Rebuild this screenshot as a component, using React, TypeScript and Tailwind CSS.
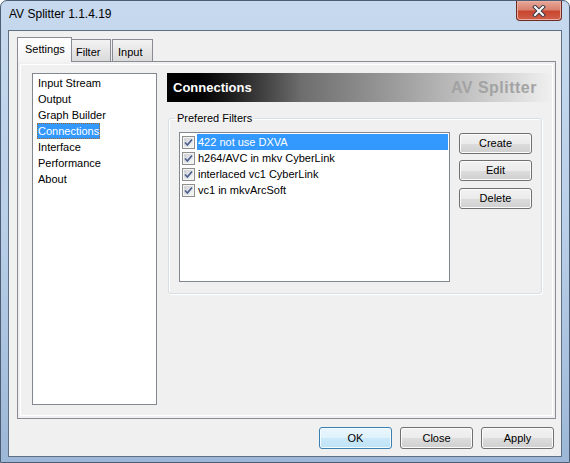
import React from "react";

const settingsPages = ["Input Stream", "Output", "Graph Builder", "Connections", "Interface", "Performance", "About"];

const filters = [
  { id: 1, name: "422 not use DXVA", selected: true },
  { id: 2, name: "h264/AVC in mkv CyberLink" },
  { id: 3, name: "interlaced vc1 CyberLink" },
  { id: 4, name: "vc1 in mkvArcSoft" },
];

function CheckBox() {
  return (
    <span className="w-[13px] h-[13px] shrink-0 border border-[#8f8f8f] bg-[#f4f4f4] p-[1px] flex">
      <span className="flex-1 flex items-center justify-center bg-linear-to-br from-[#cdd0d4] to-[#f7f7f7]">
        <svg width="9" height="9" viewBox="0 0 9 9">
          <path d="M1 4.5 L3.4 7 L8 1.5" fill="none" stroke="#4b5f8c" strokeWidth="1.7" />
        </svg>
      </span>
    </span>
  );
}

function WinButton({ label, isDefault = false, className = "" }: { label: string; isDefault?: boolean; className?: string }) {
  return (
    <button
      className={`w-[73px] rounded-[3px] border text-[11px] text-black leading-none ${
        isDefault
          ? "border-[#3c7fb1] bg-[linear-gradient(#eaf6fd,#dff2fc_50%,#cbe9f9_50%,#bde2f6)] shadow-[inset_0_0_0_1px_#f4fbff]"
          : "border-[#707070] bg-[linear-gradient(#f2f2f2,#ebebeb_50%,#dddddd_50%,#cfcfcf)] shadow-[inset_0_0_0_1px_#fbfbfb]"
      } ${className}`}
    >
      {label}
    </button>
  );
}

export default function App() {
  return (
    <div className="w-[570px] h-[463px] font-['Liberation_Sans',Arial,sans-serif] border border-[#4d5e74] rounded-t-[7px] bg-linear-to-b from-[#c6d9ee] via-[#b9cfe8] to-[#9cb7d7] flex flex-col overflow-hidden">
      {/* title bar */}
      <div className="h-[29px] flex justify-between items-start shrink-0">
        <span className="pl-[8px] pt-[6px] text-[12px] leading-[15px] text-black">AV Splitter 1.1.4.19</span>
        <div className="mr-[7px] w-[46px] h-[20px] rounded-b-[4px] border border-t-0 border-[#6e2b22] bg-[linear-gradient(#e7a89a,#d9826f_45%,#c84630_55%,#d0604a)] shadow-[inset_0_0_0_1px_#eab0a4] flex items-center justify-center">
          <svg width="14" height="12" viewBox="0 0 14 12">
            <path d="M3 2 L11 10 M11 2 L3 10" stroke="#3b3b4a" strokeWidth="4" strokeLinecap="square" />
            <path d="M3 2 L11 10 M11 2 L3 10" stroke="#ffffff" strokeWidth="2" strokeLinecap="square" />
          </svg>
        </div>
      </div>

      {/* client area */}
      <div className="mx-[7px] h-[427px] border border-[#5f6f84] bg-[#f0f0f0] flex flex-col text-[11px] text-black">
        {/* tabs */}
        <div className="h-[30px] pl-[8px] flex items-end shrink-0">
          <div className="relative z-10 -mb-px h-[25px] w-[55px] border border-b-0 border-[#898c95] bg-linear-to-b from-white to-[#f4f4f4] pl-[7px] pt-[4px] leading-[14px]">
            Settings
          </div>
          <div className="h-[22px] w-[39px] border border-b-0 border-l-0 border-[#898c95] bg-linear-to-b from-[#f3f3f3] to-[#dadada] pl-[4px] pt-[5px] leading-[14px]">
            Filter
          </div>
          <div className="ml-px h-[22px] w-[41px] border border-b-0 border-[#898c95] bg-linear-to-b from-[#f3f3f3] to-[#dadada] pl-[5px] pt-[5px] leading-[14px]">
            Input
          </div>
        </div>

        {/* tab page */}
        <div className="ml-[8px] w-[539px] h-[358px] border border-[#898c95] p-[2px] shrink-0">
          <div className="h-full border border-white flex pl-[11px] pt-[8px] gap-[10px]">
            {/* page list */}
            <div className="w-[125px] h-[332px] border border-[#828790] bg-white pt-[1px] pl-[4px] shrink-0">
              {settingsPages.map((page) => (
                <div key={page} className="h-[16px] leading-[16px]">
                  {page === "Connections" ? (
                    <span className="inline-block px-[1px] bg-[#3399ff] text-white outline-1 outline-dotted outline-[#9a6a2c] -outline-offset-1">{page}</span>
                  ) : (
                    <span className="px-[1px]">{page}</span>
                  )}
                </div>
              ))}
            </div>

            {/* right column */}
            <div className="w-[386px] flex flex-col">
              <div className="h-[29px] bg-linear-to-r from-black from-[2%] via-[#6e6e6e] via-[35%] to-[#f0f0f0] flex items-center justify-between pl-[6px] pr-[15px]">
                <span className="text-[13px] font-bold text-white">Connections</span>
                <span className="text-[16px] font-bold tracking-[0.5px] text-[#a3a3a3]">AV Splitter</span>
              </div>

              <fieldset className="mt-[10px] ml-px w-[374px] h-[182px] border border-[#d5dfe5] rounded-[3px] shadow-[inset_1px_1px_0_#fff,1px_1px_0_#fff]">
                <legend className="ml-[6px] px-[2px] leading-[13px]">Prefered Filters</legend>
                <div className="flex pl-[10px] pt-[7px]">
                  <div className="w-[271px] h-[150px] border border-[#828790] bg-white pt-[1px] pl-[2px] pr-px shrink-0">
                    {filters.map((f) => (
                      <div key={f.id} className="h-[16px] flex items-center">
                        <CheckBox />
                        <span className={`ml-[2px] flex-1 h-[16px] leading-[16px] pl-px ${f.selected ? "bg-[#3399ff] text-white" : ""}`}>
                          {f.name}
                        </span>
                      </div>
                    ))}
                  </div>
                  <div className="ml-[9px] mt-px flex flex-col">
                    <WinButton label="Create" className="h-[21px]" />
                    <WinButton label="Edit" className="h-[21px] mt-[6px]" />
                    <WinButton label="Delete" className="h-[21px] mt-[7px]" />
                  </div>
                </div>
              </fieldset>
            </div>
          </div>
        </div>

        {/* dialog buttons */}
        <div className="mt-[8px] pr-[7px] flex justify-end gap-[8px]">
          <WinButton label="OK" isDefault className="h-[22px]" />
          <WinButton label="Close" className="h-[22px]" />
          <WinButton label="Apply" className="h-[22px]" />
        </div>
      </div>
    </div>
  );
}
